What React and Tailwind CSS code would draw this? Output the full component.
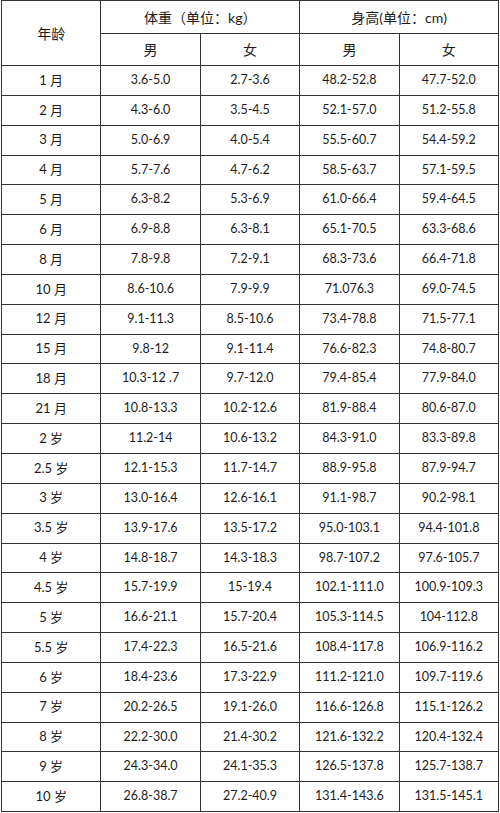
const rows = [
  ["1 月", "3.6-5.0", "2.7-3.6", "48.2-52.8", "47.7-52.0"],
  ["2 月", "4.3-6.0", "3.5-4.5", "52.1-57.0", "51.2-55.8"],
  ["3 月", "5.0-6.9", "4.0-5.4", "55.5-60.7", "54.4-59.2"],
  ["4 月", "5.7-7.6", "4.7-6.2", "58.5-63.7", "57.1-59.5"],
  ["5 月", "6.3-8.2", "5.3-6.9", "61.0-66.4", "59.4-64.5"],
  ["6 月", "6.9-8.8", "6.3-8.1", "65.1-70.5", "63.3-68.6"],
  ["8 月", "7.8-9.8", "7.2-9.1", "68.3-73.6", "66.4-71.8"],
  ["10 月", "8.6-10.6", "7.9-9.9", "71.076.3", "69.0-74.5"],
  ["12 月", "9.1-11.3", "8.5-10.6", "73.4-78.8", "71.5-77.1"],
  ["15 月", "9.8-12", "9.1-11.4", "76.6-82.3", "74.8-80.7"],
  ["18 月", "10.3-12 .7", "9.7-12.0", "79.4-85.4", "77.9-84.0"],
  ["21 月", "10.8-13.3", "10.2-12.6", "81.9-88.4", "80.6-87.0"],
  ["2 岁", "11.2-14", "10.6-13.2", "84.3-91.0", "83.3-89.8"],
  ["2.5 岁", "12.1-15.3", "11.7-14.7", "88.9-95.8", "87.9-94.7"],
  ["3 岁", "13.0-16.4", "12.6-16.1", "91.1-98.7", "90.2-98.1"],
  ["3.5 岁", "13.9-17.6", "13.5-17.2", "95.0-103.1", "94.4-101.8"],
  ["4 岁", "14.8-18.7", "14.3-18.3", "98.7-107.2", "97.6-105.7"],
  ["4.5 岁", "15.7-19.9", "15-19.4", "102.1-111.0", "100.9-109.3"],
  ["5 岁", "16.6-21.1", "15.7-20.4", "105.3-114.5", "104-112.8"],
  ["5.5 岁", "17.4-22.3", "16.5-21.6", "108.4-117.8", "106.9-116.2"],
  ["6 岁", "18.4-23.6", "17.3-22.9", "111.2-121.0", "109.7-119.6"],
  ["7 岁", "20.2-26.5", "19.1-26.0", "116.6-126.8", "115.1-126.2"],
  ["8 岁", "22.2-30.0", "21.4-30.2", "121.6-132.2", "120.4-132.4"],
  ["9 岁", "24.3-34.0", "24.1-35.3", "126.5-137.8", "125.7-138.7"],
  ["10 岁", "26.8-38.7", "27.2-40.9", "131.4-143.6", "131.5-145.1"],
];

const cell = "flex items-center justify-center border-r border-b border-[#333333]";

export default function App() {
  return (
    <div
      className="w-[500px] h-[813px] bg-white text-[#1c1c1c] overflow-hidden"
      style={{ fontFamily: 'Lato, "Noto Sans CJK SC", sans-serif' }}
    >
      <div className="ml-[1px] w-[498px] border-t border-l border-[#333333]">
        <div className="grid grid-cols-5 grid-rows-[33px_32px] text-[14px]">
          <div className={`${cell} row-span-2`}>年龄</div>
          <div className={`${cell} col-span-2`}>体重（单位：kg）</div>
          <div className={`${cell} col-span-2`}>身高(单位：cm)</div>
          <div className={cell}>男</div>
          <div className={cell}>女</div>
          <div className={cell}>男</div>
          <div className={cell}>女</div>
        </div>
        {rows.map((r, i) => (
          <div key={i} className="grid grid-cols-5 h-[29.85px] text-[12.5px]">
            {r.map((c, j) => (
              <div key={j} className={`${cell} ${j === 0 ? "text-[13px]" : ""}`}>
                {c}
              </div>
            ))}
          </div>
        ))}
      </div>
    </div>
  );
}
